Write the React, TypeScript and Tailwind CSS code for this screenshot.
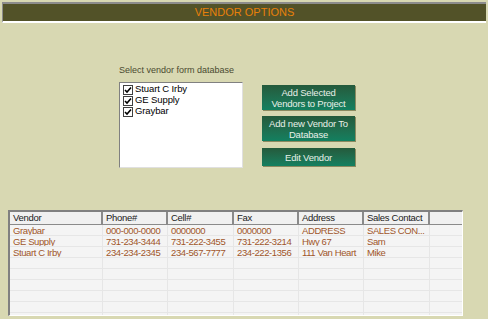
import React from 'react';

const VENDORS = [
  { name: 'Stuart C Irby', checked: true },
  { name: 'GE Supply', checked: true },
  { name: 'Graybar', checked: true },
];

const COLUMNS = [
  { label: 'Vendor', w: 'w-[93px]' },
  { label: 'Phone#', w: 'w-[65px]' },
  { label: 'Cell#', w: 'w-[66px]' },
  { label: 'Fax', w: 'w-[65px]' },
  { label: 'Address', w: 'w-[65px]' },
  { label: 'Sales Contact', w: 'w-[66px]' },
];

const ROWS = [
  ['Graybar', '000-000-0000', '0000000', '0000000', 'ADDRESS', 'SALES CON...'],
  ['GE Supply', '731-234-3444', '731-222-3455', '731-222-3214', 'Hwy 67', 'Sam'],
  ['Stuart C Irby', '234-234-2345', '234-567-7777', '234-222-1356', '111 Van Heart', 'Mike'],
];

const CheckBox = () => (
  <span className="w-[10px] h-[10px] border border-[#404040] bg-white flex items-center justify-center shrink-0">
    <svg width="8" height="8" viewBox="0 0 8 8">
      <path d="M1 4 L3 6 L7 1.5" stroke="#000" strokeWidth="1.6" fill="none" />
    </svg>
  </span>
);

const GreenButton = ({ children, h }: { children: React.ReactNode; h: string }) => (
  <div
    className={`w-[93px] ${h} flex items-center justify-center text-center leading-[11px] text-[9.5px] tracking-[-0.2px] text-[#e8f0e8] bg-gradient-to-b from-[#245a3c] to-[#128060] shadow-[1px_1px_0_#8a8a60]`}
  >
    {children}
  </div>
);

export default function App() {
  return (
    <div className="w-[488px] h-[319px] bg-[#d8d8b2] font-['Liberation_Sans',Arial,sans-serif] text-[11px] pt-[2px] px-[2px] flex flex-col">
      {/* title bar */}
      <div className="h-[21px] border-t-2 border-l border-[#8c8c8c] border-b-2 border-b-white bg-[#525228] flex items-center justify-center">
        <span className="text-[#e8800a] text-[11px]">VENDOR OPTIONS</span>
      </div>

      {/* selection area */}
      <div className="flex mt-[41px] ml-[117px]">
        <div className="flex flex-col">
          <span className="text-[#4a4a30] text-[9px] leading-[12px] mb-[6px]">Select vendor form database</span>
          <div className="w-[124px] h-[86px] bg-white border-t border-l border-[#808080] border-r border-b border-r-[#e0e0e0] border-b-[#e0e0e0] pt-[1px] pl-[3px] flex flex-col">
            {VENDORS.map(v => (
              <div key={v.name} className="flex items-center gap-[2px] h-[11px] text-[#000] text-[9.5px] tracking-[-0.1px]">
                <CheckBox />
                <span>{v.name}</span>
              </div>
            ))}
          </div>
        </div>

        <div className="flex flex-col ml-[19px] mt-[21px]">
          <GreenButton h="h-[25px]">Add Selected<br />Vendors to Project</GreenButton>
          <div className="h-[6px]" />
          <GreenButton h="h-[25px]">Add new Vendor To<br />Database</GreenButton>
          <div className="h-[7px]" />
          <GreenButton h="h-[18px]">Edit Vendor</GreenButton>
        </div>
      </div>

      {/* grid */}
      <div className="mt-[42px] ml-[6px] w-[455px] h-[106px] bg-[#f4f4f4] border-t-2 border-l-2 border-[#808080] border-b border-r border-b-white border-r-white overflow-hidden">
        <div className="flex h-[13px] bg-[#f0f0f0]">
          {COLUMNS.map(c => (
            <div
              key={c.label}
              className={`${c.w} shrink-0 border-r-2 border-b border-[#8a8a8a] pl-[3px] text-[#202020] leading-[12px] text-[9.5px] tracking-[-0.3px] whitespace-nowrap overflow-hidden`}
            >
              {c.label}
            </div>
          ))}
          <div className="flex-1 border-b border-[#8a8a8a]" />
        </div>
        {Array.from({ length: 9 }).map((_, i) => {
          const r = ROWS[i];
          return (
            <div key={i} className="flex h-[11px] border-b border-[#e6e6e6]">
              {COLUMNS.map((c, j) => (
                <div
                  key={c.label}
                  className={`${c.w} shrink-0 border-r border-[#e6e6e6] pl-[3px] leading-[11px] text-[9.5px] tracking-[-0.4px] text-[#a0562a] whitespace-nowrap overflow-hidden`}
                >
                  {r ? r[j] : ''}
                </div>
              ))}
              <div className="flex-1" />
            </div>
          );
        })}
      </div>
    </div>
  );
}
